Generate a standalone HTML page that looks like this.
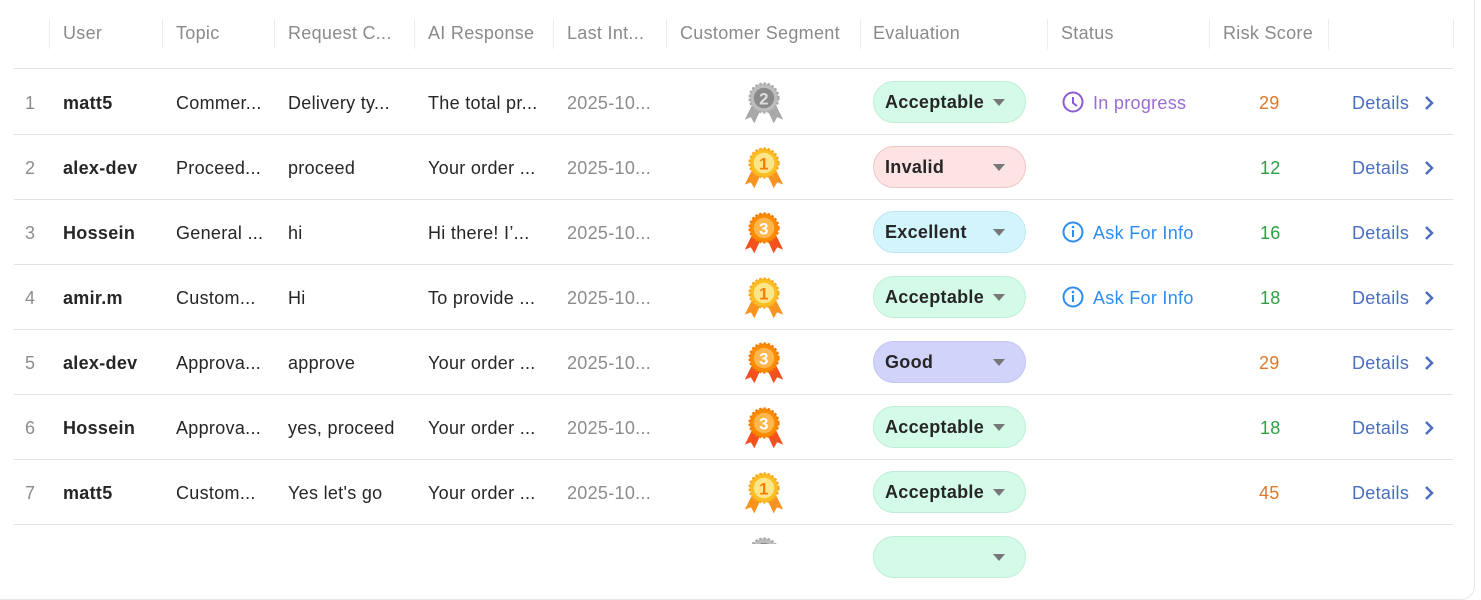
<!DOCTYPE html>
<html><head><meta charset="utf-8"><style>
*{box-sizing:border-box;margin:0;padding:0}
body{width:1481px;height:544px;overflow:hidden;background:#fff;font-family:"Liberation Sans",sans-serif;font-size:18px;letter-spacing:0.3px;color:#262626;position:relative}
.card{position:absolute;left:-20px;top:-20px;width:1495px;height:620px;border:1px solid #e6e6e6;border-radius:14px;background:#fff}
.a{position:absolute;white-space:nowrap}
.h{color:#8a8a8a;top:23px}
.sep{position:absolute;top:19px;width:1px;height:30px;background:#ececec}
.line{position:absolute;left:14px;width:1439px;height:1px;background:#e3e3e3}
.badge{position:absolute;left:873px;width:153px;height:42px;border-radius:21px;font-weight:bold;padding:0 0 0 11px;line-height:40px;border:1px solid}
.badge:after{content:"";position:absolute;right:20px;top:17px;border-left:6px solid transparent;border-right:6px solid transparent;border-top:7px solid #777}
.acc{background:#d3fbe7;border-color:#bfeed6}
.inv{background:#fde3e3;border-color:#f0c5c5}
.exc{background:#d2f4fd;border-color:#bfe8f3}
.good{background:#d1d3fb;border-color:#c3c5f3}
.num{color:#8c8c8c}
.det{color:#4a6fc0}
.r{position:absolute;left:0;width:1481px}
</style></head><body>
<div class="card"></div>
<div class="sep" style="left:49px"></div><div class="sep" style="left:162px"></div><div class="sep" style="left:274px"></div><div class="sep" style="left:414px"></div><div class="sep" style="left:553px"></div><div class="sep" style="left:666px"></div><div class="sep" style="left:860px"></div><div class="sep" style="left:1047px"></div><div class="sep" style="left:1209px"></div><div class="sep" style="left:1328px"></div><div class="sep" style="left:1453px"></div>
<div class="a h" style="left:63px">User</div>
<div class="a h" style="left:176px">Topic</div>
<div class="a h" style="left:288px">Request C...</div>
<div class="a h" style="left:428px">AI Response</div>
<div class="a h" style="left:567px">Last Int...</div>
<div class="a h" style="left:680px">Customer Segment</div>
<div class="a h" style="left:873px">Evaluation</div>
<div class="a h" style="left:1061px">Status</div>
<div class="a h" style="left:1223px">Risk Score</div>
<div class="line" style="top:68px"></div>
<div class="line" style="top:134px"></div><div class="line" style="top:199px"></div><div class="line" style="top:264px"></div><div class="line" style="top:329px"></div><div class="line" style="top:394px"></div><div class="line" style="top:459px"></div><div class="line" style="top:524px"></div>

<svg width="0" height="0" style="position:absolute"><defs>
<g id="m1"><path d="M-9 4 L-16 18 L-11 16 L-8 21 L-2 8Z M9 4 L16 18 L11 16 L8 21 L2 8Z" fill="#f7931e"/><circle r="12" fill="#fbbf24" stroke="#f9a825" stroke-width="2" stroke-dasharray="2 1.5"/><circle r="8.5" fill="#fde68a"/><text y="5.5" text-anchor="middle" font-size="14" font-weight="bold" fill="#f57c00" font-family="Liberation Sans">1</text></g>
<g id="m3"><path d="M-9 4 L-16 18 L-11 16 L-8 21 L-2 8Z M9 4 L16 18 L11 16 L8 21 L2 8Z" fill="#f4511e"/><circle r="12" fill="#fb8c00" stroke="#f57c00" stroke-width="2" stroke-dasharray="2 1.5"/><circle r="8.5" fill="#ffb74d"/><text y="5.5" text-anchor="middle" font-size="14" font-weight="bold" fill="#fff" font-family="Liberation Sans">3</text></g>
<g id="m2"><path d="M-9 4 L-16 18 L-11 16 L-8 21 L-2 8Z M9 4 L16 18 L11 16 L8 21 L2 8Z" fill="#a8a8a8"/><circle r="12" fill="#bdbdbd" stroke="#aaa" stroke-width="2" stroke-dasharray="2 1.5"/><circle r="8.5" fill="#8a8a8a"/><text y="5.5" text-anchor="middle" font-size="14" font-weight="bold" fill="#ddd" font-family="Liberation Sans">2</text></g>
</defs></svg>
<svg class="a" style="left:0;top:0" width="1481" height="544">
<g transform="translate(764 98) scale(1.2)"><use href="#m2"/></g>
<g transform="translate(764 163) scale(1.2)"><use href="#m1"/></g>
<g transform="translate(764 228) scale(1.2)"><use href="#m3"/></g>
<g transform="translate(764 293) scale(1.2)"><use href="#m1"/></g>
<g transform="translate(764 358) scale(1.2)"><use href="#m3"/></g>
<g transform="translate(764 423) scale(1.2)"><use href="#m3"/></g>
<g transform="translate(764 488) scale(1.2)"><use href="#m1"/></g>
<g transform="translate(764 553) scale(1.2)"><use href="#m2"/></g>
<g fill="none" stroke="#8b5cd6" stroke-width="2"><circle cx="1073" cy="102" r="9.5"/><path d="M1073 97v6l4 3"/></g>
<g fill="none" stroke="#2f8cf0" stroke-width="2"><circle cx="1073" cy="232" r="9.5"/><circle cx="1073" cy="297" r="9.5"/></g>
<g stroke="#2f8cf0" stroke-width="2"><path d="M1073 230v7M1073 295v7"/></g><g fill="#2f8cf0"><circle cx="1073" cy="227" r="1.3"/><circle cx="1073" cy="292" r="1.3"/></g>
<g fill="none" stroke="#4a6fc0" stroke-width="2.5"><path d="M1426 97l6 6-6 6M1426 162l6 6-6 6M1426 227l6 6-6 6M1426 292l6 6-6 6M1426 357l6 6-6 6M1426 422l6 6-6 6M1426 487l6 6-6 6"/></g>
</svg>
<div class="badge acc" style="top:81px">Acceptable</div>
<div class="badge inv" style="top:146px">Invalid</div>
<div class="badge exc" style="top:211px">Excellent</div>
<div class="badge acc" style="top:276px">Acceptable</div>
<div class="badge good" style="top:341px">Good</div>
<div class="badge acc" style="top:406px">Acceptable</div>
<div class="badge acc" style="top:471px">Acceptable</div>
<div class="badge acc" style="top:536px"></div>

<div class="r" style="top:93px">
<span class="a num" style="left:25px">1</span><b class="a" style="left:63px">matt5</b><span class="a" style="left:176px">Commer...</span><span class="a" style="left:288px">Delivery ty...</span><span class="a" style="left:428px">The total pr...</span><span class="a num" style="left:567px">2025-10...</span><span class="a" style="left:1093px;color:#9b6cd3">In progress</span><span class="a" style="left:1259px;color:#e0782a">29</span><span class="a det" style="left:1352px">Details</span></div>
<div class="r" style="top:158px">
<span class="a num" style="left:25px">2</span><b class="a" style="left:63px">alex-dev</b><span class="a" style="left:176px">Proceed...</span><span class="a" style="left:288px">proceed</span><span class="a" style="left:428px">Your order ...</span><span class="a num" style="left:567px">2025-10...</span><span class="a" style="left:1260px;color:#2ea043">12</span><span class="a det" style="left:1352px">Details</span></div>
<div class="r" style="top:223px">
<span class="a num" style="left:25px">3</span><b class="a" style="left:63px">Hossein</b><span class="a" style="left:176px">General ...</span><span class="a" style="left:288px">hi</span><span class="a" style="left:428px">Hi there! I’...</span><span class="a num" style="left:567px">2025-10...</span><span class="a" style="left:1093px;color:#2f8cf0">Ask For Info</span><span class="a" style="left:1260px;color:#2ea043">16</span><span class="a det" style="left:1352px">Details</span></div>
<div class="r" style="top:288px">
<span class="a num" style="left:25px">4</span><b class="a" style="left:63px">amir.m</b><span class="a" style="left:176px">Custom...</span><span class="a" style="left:288px">Hi</span><span class="a" style="left:428px">To provide ...</span><span class="a num" style="left:567px">2025-10...</span><span class="a" style="left:1093px;color:#2f8cf0">Ask For Info</span><span class="a" style="left:1260px;color:#2ea043">18</span><span class="a det" style="left:1352px">Details</span></div>
<div class="r" style="top:353px">
<span class="a num" style="left:25px">5</span><b class="a" style="left:63px">alex-dev</b><span class="a" style="left:176px">Approva...</span><span class="a" style="left:288px">approve</span><span class="a" style="left:428px">Your order ...</span><span class="a num" style="left:567px">2025-10...</span><span class="a" style="left:1259px;color:#e0782a">29</span><span class="a det" style="left:1352px">Details</span></div>
<div class="r" style="top:418px">
<span class="a num" style="left:25px">6</span><b class="a" style="left:63px">Hossein</b><span class="a" style="left:176px">Approva...</span><span class="a" style="left:288px">yes, proceed</span><span class="a" style="left:428px">Your order ...</span><span class="a num" style="left:567px">2025-10...</span><span class="a" style="left:1260px;color:#2ea043">18</span><span class="a det" style="left:1352px">Details</span></div>
<div class="r" style="top:483px">
<span class="a num" style="left:25px">7</span><b class="a" style="left:63px">matt5</b><span class="a" style="left:176px">Custom...</span><span class="a" style="left:288px">Yes let's go</span><span class="a" style="left:428px">Your order ...</span><span class="a num" style="left:567px">2025-10...</span><span class="a" style="left:1259px;color:#e0782a">45</span><span class="a det" style="left:1352px">Details</span></div>
</body></html>
